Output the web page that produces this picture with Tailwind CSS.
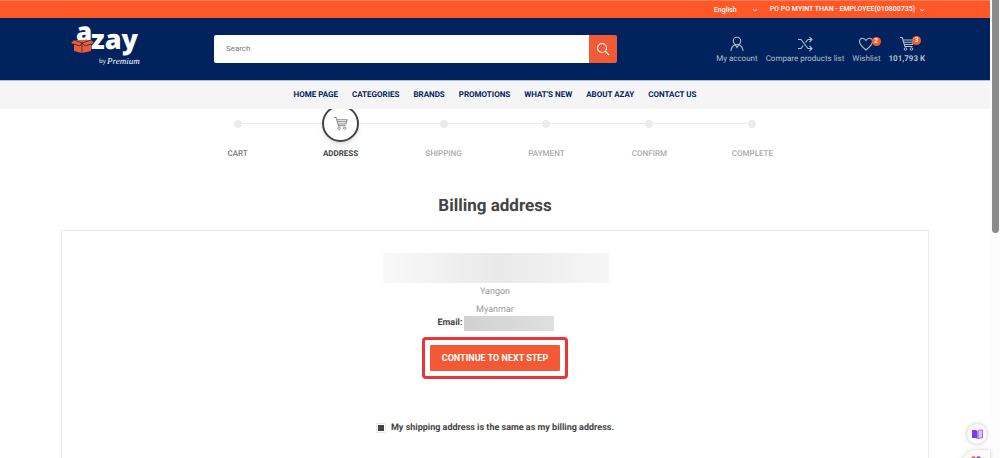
<!DOCTYPE html>
<html lang="en">
<head>
<meta charset="utf-8">
<meta name="viewport" content="width=device-width, initial-scale=1">
<title>Azay - Billing address</title>
<script src="https://cdn.jsdelivr.net/npm/@tailwindcss/browser@4"></script>
</head>
<body class="flex h-screen overflow-hidden bg-white font-['Roboto',sans-serif] text-[9px] text-[#444] [text-rendering:geometricPrecision]">
<svg class="hidden" aria-hidden="true">
  <symbol id="cart" viewBox="0 0 16 16">
    <path d="M1 1.5h2.2l2.7 9h7.600M4 4h11l-1.300 4.500H5.300M4.700 6.200h9.700" fill="none" stroke="currentColor" stroke-width="1.1"/>
    <circle cx="6.500" cy="13" r="1.300" fill="none" stroke="currentColor"/><circle cx="12.500" cy="13" r="1.300" fill="none" stroke="currentColor"/>
  </symbol>
  <symbol id="chevron" viewBox="0 0 6 6"><path d="M1 2l2 2 2-2" fill="none" stroke="currentColor" stroke-width=".9"/></symbol>
</svg>

<div class="flex min-w-0 flex-1 flex-col">
  <header class="relative z-10">
    <div class="border-t border-[#ff8052] bg-[#ff5728] text-white">
      <div class="mx-auto flex h-[17px] w-[87.7%] items-center justify-end gap-3 pr-1 text-[7px] font-medium">
        <label class="relative flex items-center">
          <span class="sr-only">Language</span>
          <select class="h-4 w-[44px] appearance-none bg-transparent p-0 leading-4 outline-none"><option>English</option></select>
          <svg class="pointer-events-none absolute right-0 size-[6px]"><use href="#chevron"/></svg>
        </label>
        <button type="button" aria-haspopup="true" class="flex items-center gap-1">PO PO MYINT THAN - EMPLOYEE(010800735)<svg class="size-[6px]"><use href="#chevron"/></svg></button>
      </div>
    </div>

    <div class="bg-[#00235d]">
      <div class="mx-auto flex h-[62px] w-[87.7%] items-center pr-1">
        <a href="#" aria-label="Azay by Premium" class="block w-[153px]">
          <svg class="overflow-visible" width="90" height="62" viewBox="60 18 90 62" fill="#fff">
            <text x="75" y="41" font-family="Open Sans, sans-serif" font-weight="800" font-size="26">a</text>
            <text x="90" y="49" font-family="Open Sans, sans-serif" font-weight="800" font-size="27">zay</text>
            <path d="M73 40h17l3 3-3 1v7l-9 2-8-2v-7l-3-1z" fill="#f25a36"/>
            <path d="M73 40l8 3 9-3M81 43v10M73 44l6 2 2-3 3 3 6-2" fill="none" stroke="#00235d" stroke-width=".7"/>
            <text x="98" y="63" font-family="Open Sans, sans-serif" font-size="6">by</text>
            <text x="106" y="64" font-family="Liberation Serif, serif" font-style="italic" font-size="9">Premium</text>
          </svg>
        </a>
        <form role="search" class="flex h-[28px] min-w-0 flex-1 overflow-hidden rounded-[2px]">
          <input type="search" aria-label="Search" placeholder="Search" class="min-w-0 flex-1 bg-white px-3 text-[8px] outline-none placeholder:text-[#777]">
          <button type="submit" aria-label="Search" class="flex w-7 items-center justify-center bg-[#f25a36] text-white">
            <svg class="size-[14px]" viewBox="0 0 14 14" fill="none" stroke="currentColor" stroke-width="1.1"><circle cx="6" cy="6" r="4.5"/><path d="M9.2 9.2l3.8 3.8"/></svg>
          </button>
        </form>
        <nav aria-label="Account" class="ml-[99px] flex gap-[8px] pt-px text-[8px] leading-[10px] text-[#b4bdcc]">
          <a href="#" class="flex flex-col items-center gap-[2px]">
            <svg class="size-4" viewBox="0 0 16 16" fill="none" stroke="currentColor" stroke-width="1.1"><circle cx="8" cy="5" r="3.700"/><path d="M2 15c0-3.200 1.600-5 4-6.500l2 3 2-3c2.400 1.500 4 3.300 4 6.500"/></svg>My account</a>
          <a href="#" class="flex flex-col items-center gap-[2px]">
            <svg class="size-4" viewBox="0 0 16 16" fill="none" stroke="currentColor" stroke-width="1.1"><path d="M1 3.500h3l7 9h4M1 12.500h3l2.300-3M8.500 6.500L11 3.500h4M12.500 1L15 3.500 12.500 6M12.500 10l2.500 2.500-2.500 2.500"/></svg>Compare products list</a>
          <a href="#" class="relative flex flex-col items-center gap-[2px]">
            <svg class="size-4" viewBox="0 0 16 16" fill="none" stroke="currentColor" stroke-width="1.1"><path d="M8 14C4 10.800 1.500 8.500 1.500 5.500 1.500 1.800 6 1 8 4.500c2-3.500 6.500-2.700 6.500 1C14.500 8.500 12 10.800 8 14z"/></svg>Wishlist
            <span class="absolute right-0 top-px flex size-[9px] items-center justify-center rounded-full bg-[#ff5728] text-[7px] font-bold text-white">2</span></a>
          <a href="#" class="relative flex flex-col items-center gap-[2px] font-bold">
            <svg class="size-4"><use href="#cart"/></svg>101,793 K
            <span class="absolute right-1 top-0 flex size-[9px] items-center justify-center rounded-full bg-[#ff5728] text-[7px] font-bold text-white">3</span></a>
        </nav>
      </div>
    </div>

    <nav aria-label="Main" class="flex h-[29px] items-center justify-center gap-[14px] border-t border-[#b3bdd1] bg-[#f5f5f5] text-[8px] font-bold text-[#00235d]">
      <a href="#">HOME PAGE</a><a href="#">CATEGORIES</a><a href="#">BRANDS</a><a href="#">PROMOTIONS</a><a href="#">WHAT'S NEW</a><a href="#">ABOUT AZAY</a><a href="#">CONTACT US</a>
    </nav>
  </header>

  <main class="flex flex-1 flex-col items-center">
    <ol class="-mt-1 grid w-[62.4%] grid-cols-6 text-center text-[8px] font-medium text-[#aaa]">
      <li class="text-[#777]"><div class="flex h-[37px] items-center"><i class="flex-1"></i><i class="size-2 rounded-full bg-[#ebebeb]"></i><i class="h-px flex-1 bg-[#ebebeb]"></i></div><a href="#" class="mt-[7px] block leading-[10px]">CART</a></li>
      <li class="font-bold text-[#444]"><div class="flex h-[37px] items-center"><i class="h-px flex-1 bg-[#ebebeb]"></i><span class="flex size-[37px] items-center justify-center rounded-full border-2 border-[#444] bg-white text-[#888] shadow-md"><svg class="size-[15px]"><use href="#cart"/></svg></span><i class="h-px flex-1 bg-[#ebebeb]"></i></div><a href="#" class="mt-[7px] block leading-[10px]">ADDRESS</a></li>
      <li><div class="flex h-[37px] items-center"><i class="h-px flex-1 bg-[#ebebeb]"></i><i class="size-2 rounded-full bg-[#ebebeb]"></i><i class="h-px flex-1 bg-[#ebebeb]"></i></div><a href="#" class="mt-[7px] block leading-[10px]">SHIPPING</a></li>
      <li><div class="flex h-[37px] items-center"><i class="h-px flex-1 bg-[#ebebeb]"></i><i class="size-2 rounded-full bg-[#ebebeb]"></i><i class="h-px flex-1 bg-[#ebebeb]"></i></div><a href="#" class="mt-[7px] block leading-[10px]">PAYMENT</a></li>
      <li><div class="flex h-[37px] items-center"><i class="h-px flex-1 bg-[#ebebeb]"></i><i class="size-2 rounded-full bg-[#ebebeb]"></i><i class="h-px flex-1 bg-[#ebebeb]"></i></div><a href="#" class="mt-[7px] block leading-[10px]">CONFIRM</a></li>
      <li><div class="flex h-[37px] items-center"><i class="h-px flex-1 bg-[#ebebeb]"></i><i class="size-2 rounded-full bg-[#ebebeb]"></i><i class="flex-1"></i></div><a href="#" class="mt-[7px] block leading-[10px]">COMPLETE</a></li>
    </ol>

    <h1 class="mt-[35px] text-[17px] font-bold leading-6">Billing address</h1>

    <section class="mt-[12px] flex w-[87.7%] flex-1 flex-col items-center border border-b-0 border-[#ebebeb] pt-[22px]">
      <div class="ml-[2px] h-[30px] w-[226px] bg-linear-to-r from-[#f9f9f9] via-[#e9e9e9] to-[#f6f6f6]"></div>
      <p class="text-[9px] leading-[18px] text-[#999]">Yangon</p>
      <p class="text-[9px] leading-[18px] text-[#999]">Myanmar</p>
      <p class="-mt-[3px] flex h-[15px] items-center gap-[2px] pl-[2px] text-[9px] font-bold">Email: <span class="h-[15px] w-[90px] bg-linear-to-r from-[#d1d1d1] to-[#dfdfdf]"></span></p>
      <div class="mt-[6px] rounded-[4px] border-[3px] border-[#ec3438] p-[5px]">
        <button type="button" class="h-[26px] w-[130px] rounded-[1px] bg-[#f25a36] pt-px text-[9px] font-bold text-white">CONTINUE TO NEXT STEP</button>
      </div>
      <label class="mt-[43px] flex items-center gap-[5px] text-[9px] font-bold leading-3">
        <input type="checkbox" checked class="size-[10px] appearance-none border border-[#e8e8e8] bg-white p-px checked:bg-[#444] checked:bg-clip-content">My shipping address is the same as my billing address.</label>
    </section>
  </main>
</div>

<div class="flex w-[10px] flex-col items-center bg-[#fcfcfc]" aria-hidden="true"><div class="h-[233px] w-[7px] rounded-b-full bg-[#8b8b8b]"></div></div>

<button type="button" aria-label="Reading mode" class="fixed bottom-[14px] right-[13px] flex size-5 items-center justify-center rounded-full bg-[#fafafa] shadow-[0_0_4px_rgb(0_0_0/.25)]">
  <svg class="size-[11px]" viewBox="0 0 11 11"><path d="M0 1h4l1.500 1v8L4 9H0z" fill="#7c3aed"/><path d="M6 2l1.500-1H10.500v8H7L6 10z" fill="#d9c7fb" stroke="#8b50f0" stroke-width=".8"/></svg>
</button>
<button type="button" aria-label="Assistant" class="fixed -bottom-[18px] right-[10px] flex h-[26px] w-7 justify-center rounded-tl-[14px] bg-[#fafafa] pt-[6px] shadow-[0_0_4px_rgb(0_0_0/.2)]">
  <svg width="10" height="10" viewBox="0 0 10 10"><circle cx="2.500" cy="2.500" r="2.300" fill="#ee5a3a"/><circle cx="7.500" cy="2.500" r="2.300" fill="#a43ad6"/></svg>
</button>
</body>
</html>
